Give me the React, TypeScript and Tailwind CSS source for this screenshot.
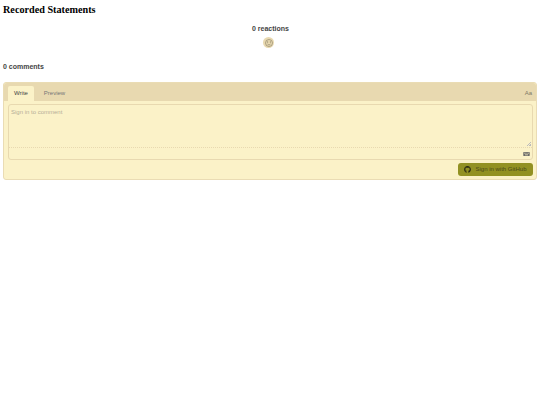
import { FaGithub } from 'react-icons/fa'

export default function App() {
  return (
    <div className="min-h-[405px] bg-white px-[3px] font-['Liberation_Sans',sans-serif] antialiased">
      <h1 className="pt-[3px] font-['Liberation_Serif',serif] text-[10.2px] font-bold leading-[14px] text-black">
        Recorded Statements
      </h1>

      {/* Reactions */}
      <div className="mt-[7px] flex flex-col items-center pl-[1px]">
        <p className="text-[7px] font-bold leading-[10px] text-[#444]">0 reactions</p>
        <button className="mr-[4px] mt-[3px] flex h-[11px] w-[11px] items-center justify-center rounded-full bg-[#e9d9b0]">
          <svg viewBox="0 0 16 16" className="h-[8px] w-[8px]" fill="none" stroke="#8a8068" strokeWidth="1.3">
            <circle cx="8" cy="8" r="7" />
            <path d="M5 10c.8 1 1.8 1.5 3 1.5s2.200-.5 3-1.500" />
            <circle cx="5.500" cy="6" r=".6" fill="#8a8068" />
            <circle cx="10.500" cy="6" r=".6" fill="#8a8068" />
          </svg>
        </button>
      </div>

      <h2 className="mt-[14px] text-[7px] font-bold leading-[10px] text-[#444]">0 comments</h2>

      {/* Comment box */}
      <div className="mt-[10px] rounded-[3px] border border-[#eadcb4] bg-[#fbf2c8]">
        <div className="flex h-[18px] items-end justify-between rounded-t-[3px] bg-[#e8d9b0] pl-[4px] pr-[4px]">
          <div className="flex items-end">
            <span className="flex h-[15px] w-[26px] items-center justify-center rounded-t-[2px] bg-[#fbf2c8] text-[6px] text-[#444]">
              Write
            </span>
            <span className="flex h-[15px] w-[41px] items-center justify-center text-[6px] text-[#777]">
              Preview
            </span>
          </div>
          <span className="flex h-[15px] items-center text-[6px] text-[#807a66]">Aa</span>
        </div>

        <div className="pl-[4px] pr-[3px] pt-[3px]">
          <div className="rounded-[3px] border border-[#e8d9b0]">
            <div className="relative h-[43px] border-b border-dotted border-[#e8d9b0] px-[2px] py-[3px] text-[6px] leading-[9px] text-[#b5ae98]">
              Sign in to comment
              <span className="absolute bottom-[1px] right-[1px] h-[4px] w-[4px] bg-[linear-gradient(135deg,transparent_50%,#bbb_50%,#bbb_60%,transparent_60%,transparent_75%,#bbb_75%)]" />
            </div>
            <div className="flex h-[11px] items-center justify-end pr-[2px]">
              <svg viewBox="0 0 16 10" className="h-[4px] w-[7px]" fill="#666">
                <path d="M1 0h14a1 1 0 0 1 1 1v8a1 1 0 0 1-1 1H1a1 1 0 0 1-1-1V1a1 1 0 0 1 1-1zm1 2v2h2V2H2zm3 0v2h2V2H5zm3 0v2h2V2H8zm3 0v2h3V2h-3zM4 6v2h8V6H4z" fillRule="evenodd" />
              </svg>
            </div>
          </div>
        </div>

        <div className="flex justify-end pl-[4px] pr-[3px] py-[3px]">
          <button className="flex h-[13px] w-[75px] items-center justify-center gap-[4px] rounded-[3px] bg-[#929122] text-[6px] text-[#4a4a18]">
            <FaGithub className="h-[7px] w-[7px] text-[#2b2b10]" />
            Sign in with GitHub
          </button>
        </div>
      </div>
    </div>
  )
}
